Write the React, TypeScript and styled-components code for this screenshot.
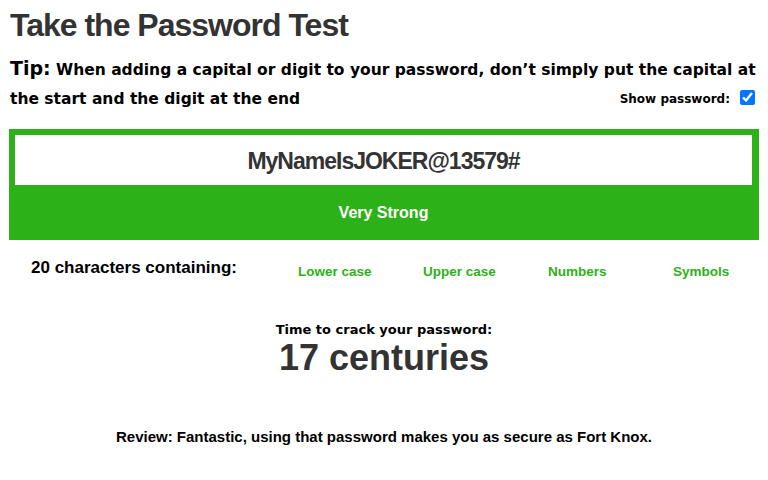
import React, { useState } from "react"
import styled, { createGlobalStyle } from "styled-components"

const WIDE = `"DejaVu Sans", "Verdana", sans-serif`
const HEAD = `"Liberation Sans", Arial, sans-serif`
const NARROW = `"Liberation Sans", Arial, sans-serif`
const GREEN = "#2db118"

const GlobalStyle = createGlobalStyle`
  html, body {
    margin: 0;
    padding: 0;
    background: #ffffff;
  }
`

const Page = styled.div`
  width: 768px;
  height: 480px;
  padding: 0 9px;
  box-sizing: border-box;
  overflow: hidden;
`

const Title = styled.h1`
  margin: 0;
  padding: 6px 0 0 1px;
  font-family: ${HEAD};
  font-size: 32px;
  font-weight: bold;
  letter-spacing: -1px;
  color: #333333;
  line-height: 38px;
`

const TipRow = styled.div`
  margin: 10px 0 0 1px;
  display: flow-root;
`

const Tip = styled.p`
  margin: 0;
  font-family: ${WIDE};
  font-size: 15.5px;
  font-weight: bold;
  line-height: 29px;
  color: #000000;
`

const TipLabel = styled.span`
  font-size: 19px;
`

const ShowPassword = styled.label`
  float: right;
  display: flex;
  align-items: center;
  gap: 10px;
  margin: -29px 4px 0 0;
  font-family: ${WIDE};
  font-size: 12px;
  font-weight: bold;
  line-height: 29px;
`

const Check = styled.input`
  width: 15px;
  height: 15px;
  margin: -4px 0 0;
`

const Meter = styled.div<{ $color: string }>`
  margin-top: 15px;
  background: ${(p) => p.$color};
  padding: 6px 7px 0 6px;
  height: 111px;
  box-sizing: border-box;
  display: flex;
  flex-direction: column;
`

const PasswordInput = styled.input`
  height: 50px;
  border: none;
  outline: none;
  box-sizing: border-box;
  padding: 2px 0 0;
  text-align: center;
  font-family: ${NARROW};
  font-size: 23px;
  font-weight: bold;
  letter-spacing: -1px;
  color: #333333;
  background: #ffffff;
  caret-color: #333333;
`

const Strength = styled.div`
  flex: 1;
  display: flex;
  align-items: center;
  justify-content: center;
  font-family: ${NARROW};
  font-size: 16px;
  font-weight: bold;
  color: #ffffff;
`

const Criteria = styled.div`
  display: grid;
  grid-template-columns: 250px repeat(4, 125px);
  align-items: center;
  margin-top: 16px;
`

const CountText = styled.div`
  text-align: center;
  font-family: ${NARROW};
  font-size: 17px;
  font-weight: bold;
  color: #000000;
`

const Criterion = styled.div<{ $met: boolean }>`
  padding: 8px 0 0 39px;
  font-family: ${NARROW};
  font-size: 13.5px;
  font-weight: bold;
  color: ${(p) => (p.$met ? GREEN : "#999999")};
  white-space: nowrap;
`

const Crack = styled.div`
  margin-top: 42px;
  text-align: center;
`

const CrackLabel = styled.div`
  font-family: ${WIDE};
  font-size: 13px;
  font-weight: bold;
  color: #000000;
  line-height: 18px;
`

const CrackTime = styled.div`
  font-family: ${HEAD};
  font-size: 36px;
  font-weight: bold;
  color: #333333;
  line-height: 38px;
`

const Review = styled.p`
  margin: 51px 0 0;
  text-align: center;
  font-family: ${NARROW};
  font-size: 15px;
  font-weight: bold;
  color: #000000;
`

const criteria = [
  { label: "Lower case", test: /[a-z]/ },
  { label: "Upper case", test: /[A-Z]/ },
  { label: "Numbers", test: /[0-9]/ },
  { label: "Symbols", test: /[^a-zA-Z0-9]/ },
]

export default function App() {
  const [password, setPassword] = useState("MyNameIsJOKER@13579#")
  const [show, setShow] = useState(true)

  return (
    <>
      <GlobalStyle />
      <Page>
        <Title>Take the Password Test</Title>
        <TipRow>
          <Tip>
            <TipLabel>Tip:</TipLabel> When adding a capital or digit to your password, don’t simply put the
            capital at the start and the digit at the end
          </Tip>
          <ShowPassword>
            Show password:
            <Check type="checkbox" checked={show} onChange={(e) => setShow(e.target.checked)} />
          </ShowPassword>
        </TipRow>
        <Meter $color={GREEN}>
          <PasswordInput
            type={show ? "text" : "password"}
            value={password}
            onChange={(e) => setPassword(e.target.value)}
            autoFocus
          />
          <Strength>Very Strong</Strength>
        </Meter>
        <Criteria>
          <CountText>{password.length} characters containing:</CountText>
          {criteria.map((c) => (
            <Criterion key={c.label} $met={c.test.test(password)}>
              {c.label}
            </Criterion>
          ))}
        </Criteria>
        <Crack>
          <CrackLabel>Time to crack your password:</CrackLabel>
          <CrackTime>17 centuries</CrackTime>
        </Crack>
        <Review>Review: Fantastic, using that password makes you as secure as Fort Knox.</Review>
      </Page>
    </>
  )
}
